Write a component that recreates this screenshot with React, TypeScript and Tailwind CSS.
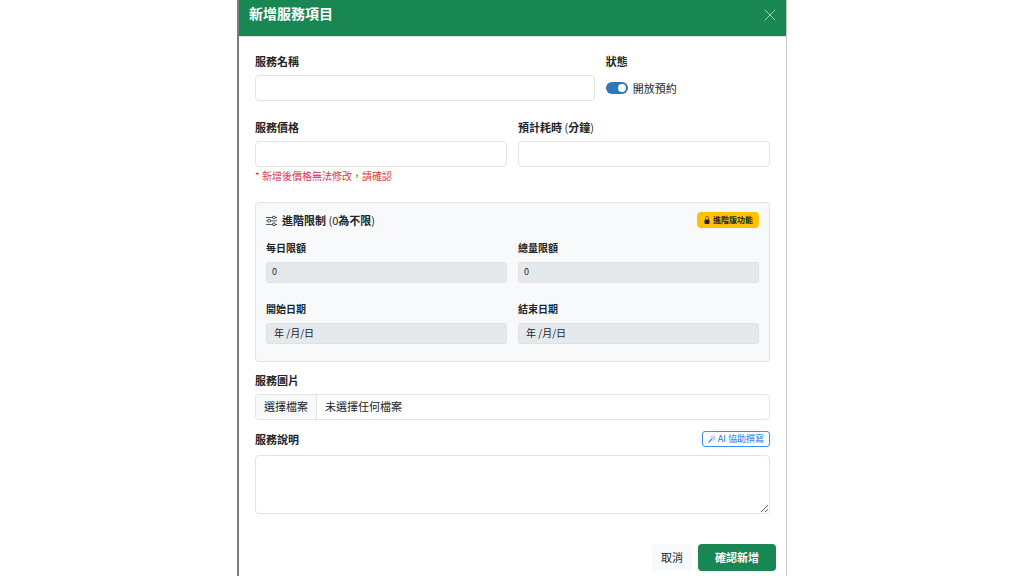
/**
 * Service item form
 * Dialog for adding a bookable service
 */

import type { ReactNode } from 'react';
import { BsLockFill, BsMagic, BsSliders } from 'react-icons/bs';

const inputClass =
    'block h-[26px] w-full rounded-[4px] border border-[#e1e4e7] bg-white px-2 text-[11px] text-[#212529] outline-none focus:border-[#86b7fe]';

const limits = [
    { id: 'dailyLimit', label: '每日限額', value: '0', isDate: false },
    { id: 'totalLimit', label: '總量限額', value: '0', isDate: false },
    { id: 'startDate', label: '開始日期', value: '年 /月/日', isDate: true },
    { id: 'endDate', label: '結束日期', value: '年 /月/日', isDate: true },
];

export default function App() {
    return (
        <div className="min-h-screen bg-white font-['Noto_Sans_CJK_TC',sans-serif] text-[#212529]">
            <div
                role="dialog"
                aria-labelledby="dialogTitle"
                className="mx-auto min-h-screen max-w-[550px] border-r border-l-2 border-r-[#c4c6c8] border-l-[#7b7d7e] bg-white"
            >
                <header className="flex items-end justify-between border-b border-[#dee2e6] bg-[#198754] px-[10px] pt-[3px] pb-[13px]">
                    <h1 id="dialogTitle" className="text-[14px] leading-5 font-bold text-white">
                        新增服務項目
                    </h1>
                    <button type="button" aria-label="關閉" className="pb-[2px] text-white/60">
                        <svg className="size-3" viewBox="0 0 12 12" fill="none" stroke="currentColor" strokeLinecap="round">
                            <path d="M1 1l10 10M11 1L1 11" />
                        </svg>
                    </button>
                </header>

                <form>
                    <div className="px-4 pt-4">
                        <div className="mb-[18px] grid grid-cols-3 gap-[11px]">
                            <div className="col-span-2">
                                <FieldLabel htmlFor="serviceName">服務名稱</FieldLabel>
                                <input id="serviceName" type="text" className={inputClass} />
                            </div>
                            <div>
                                <p className="mb-[6px] text-[11px] leading-4 font-bold">狀態</p>
                                <div className="flex h-[26px] items-center gap-[5px]">
                                    <input
                                        id="serviceActive"
                                        type="checkbox"
                                        role="switch"
                                        defaultChecked
                                        className="peer sr-only"
                                    />
                                    <label
                                        htmlFor="serviceActive"
                                        aria-hidden="true"
                                        className="flex h-3 w-[22px] items-center rounded-full bg-[#adb5bd] px-[2px] peer-checked:justify-end peer-checked:bg-[#2f76b9]"
                                    >
                                        <span className="size-2 rounded-full bg-white" />
                                    </label>
                                    <label htmlFor="serviceActive" className="text-[11px] leading-4">
                                        開放預約
                                    </label>
                                </div>
                            </div>
                        </div>

                        <div className="mb-[18px] grid grid-cols-2 gap-[11px]">
                            <div>
                                <FieldLabel htmlFor="servicePrice">服務價格</FieldLabel>
                                <input id="servicePrice" type="text" inputMode="numeric" className={inputClass} />
                                <p className="mt-px text-[10px] leading-4 text-[#dc3545]">* 新增後價格無法修改，請確認</p>
                            </div>
                            <div>
                                <FieldLabel htmlFor="serviceDuration">
                                    預計耗時 <span className="font-normal">(</span>分鐘<span className="font-normal">)</span>
                                </FieldLabel>
                                <input id="serviceDuration" type="text" inputMode="numeric" className={inputClass} />
                            </div>
                        </div>

                        {/* Advanced limits, locked on the basic plan */}
                        <section className="mb-[10px] rounded-[4px] border border-[#e1e4e7] bg-[#f8f9fa] px-[10px] pt-[9px] pb-[17px]">
                            <div className="mb-3 flex items-end justify-between">
                                <h2 className="flex items-center gap-[5px] text-[11px] leading-4 font-bold">
                                    <BsSliders className="size-[11px]" />
                                    <span>
                                        進階限制 <span className="font-normal">(0</span>為不限<span className="font-normal">)</span>
                                    </span>
                                </h2>
                                <span className="flex h-4 items-center gap-[2px] rounded-[4px] bg-[#ffc107] px-[6px] text-[8px] leading-4 font-bold">
                                    <BsLockFill className="size-2" />
                                    進階版功能
                                </span>
                            </div>
                            <div className="grid grid-cols-2 gap-x-[11px] gap-y-[18px]">
                                {limits.map((limit) => (
                                    <div key={limit.id}>
                                        <label htmlFor={limit.id} className="mb-[6px] block text-[10px] leading-4 font-bold">
                                            {limit.label}
                                        </label>
                                        <input
                                            id={limit.id}
                                            type="text"
                                            disabled
                                            defaultValue={limit.value}
                                            className={`block h-[21px] w-full rounded-[3px] border border-[#dee2e6] bg-[#e6e9ec] pb-[2px] ${
                                                limit.isDate ? 'px-[7px] text-[10px]' : 'px-[5px] text-[9px]'
                                            }`}
                                        />
                                    </div>
                                ))}
                            </div>
                        </section>

                        <div className="mb-[11px]">
                            <FieldLabel htmlFor="serviceImage">服務圖片</FieldLabel>
                            <input id="serviceImage" type="file" className="sr-only" />
                            <label
                                htmlFor="serviceImage"
                                className="flex h-[26px] items-stretch overflow-hidden rounded-[4px] border border-[#e1e4e7] text-[11px] leading-[22px]"
                            >
                                <span className="border-r border-[#e1e4e7] bg-[#f8f9fa] px-2">選擇檔案</span>
                                <span className="px-2">未選擇任何檔案</span>
                            </label>
                        </div>

                        <div className="mb-2 flex items-center justify-between">
                            <label htmlFor="serviceNote" className="text-[11px] leading-4 font-bold">
                                服務說明
                            </label>
                            <button
                                type="button"
                                className="flex h-4 items-center gap-[2px] rounded-[3px] border border-[#3d8bfd] px-[5px] text-[9px] leading-3 text-[#0d6efd]"
                            >
                                <BsMagic className="size-2" />
                                AI 協助撰寫
                            </button>
                        </div>
                        <textarea
                            id="serviceNote"
                            className="block h-[59px] w-full rounded-[4px] border border-[#e1e4e7] px-2 py-1 text-[11px] outline-none focus:border-[#86b7fe]"
                        />
                    </div>

                    <footer className="flex justify-end gap-[6px] px-[10px] pt-[30px]">
                        <button type="button" className="h-[27px] rounded-[4px] bg-[#f8f9fa] px-[9px] pb-[2px] text-[11px] leading-4">
                            取消
                        </button>
                        <button
                            type="submit"
                            className="h-[27px] rounded-[4px] bg-[#198754] px-[17px] pb-[2px] text-[11px] leading-4 font-bold text-white"
                        >
                            確認新增
                        </button>
                    </footer>
                </form>
            </div>
        </div>
    );
}

interface FieldLabelProps {
    htmlFor: string;
    children: ReactNode;
}

function FieldLabel({ htmlFor, children }: FieldLabelProps) {
    return (
        <label htmlFor={htmlFor} className="mb-[6px] block text-[11px] leading-4 font-bold">
            {children}
        </label>
    );
}
